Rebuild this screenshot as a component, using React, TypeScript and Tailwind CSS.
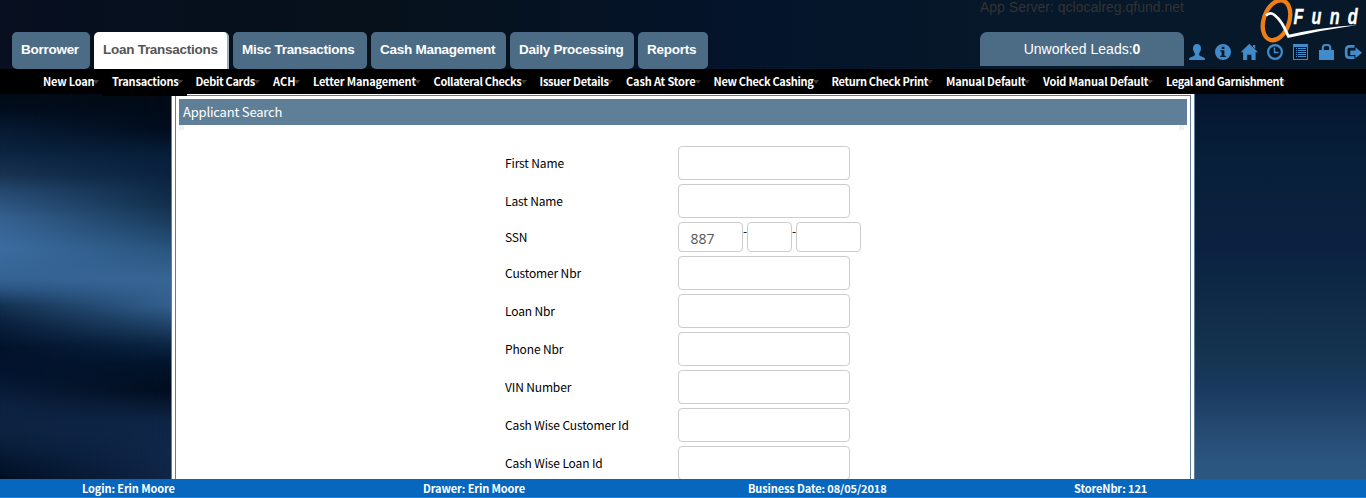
import type { ReactNode } from 'react';

const SANS = "font-['Liberation_Sans',Arial,sans-serif]";
const SOURCE = "font-['Noto_Sans_CJK_SC','Source_Sans_Pro',sans-serif]";

const tabs = [
  { label: 'Borrower', width: 'w-[78px]' },
  { label: 'Loan Transactions', width: 'w-[135px]', active: true },
  { label: 'Misc Transactions', width: 'w-[134px]' },
  { label: 'Cash Management', width: 'w-[135px]' },
  { label: 'Daily Processing', width: 'w-[124px]' },
  { label: 'Reports', width: 'w-[70px]' },
];

const menu = [
  { label: 'New Loan', width: 'w-[69px] tracking-[-0.2px]' },
  { label: 'Transactions', width: 'w-[83.5px] tracking-[-0.23px]' },
  { label: 'Debit Cards', width: 'w-[77.5px] tracking-[-0.3px]' },
  { label: 'ACH', width: 'w-[40px]' },
  { label: 'Letter Management', width: 'w-[120.5px] tracking-[-0.17px]' },
  { label: 'Collateral Checks', width: 'w-[106px] tracking-[-0.34px]' },
  { label: 'Issuer Details', width: 'w-[86.5px] tracking-[-0.23px]' },
  { label: 'Cash At Store', width: 'w-[87.5px] tracking-[-0.16px]' },
  { label: 'New Check Cashing', width: 'w-[118px] tracking-[-0.32px]' },
  { label: 'Return Check Print', width: 'w-[114.5px] tracking-[-0.32px]' },
  { label: 'Manual Default', width: 'w-[97px] tracking-[-0.19px]' },
  { label: 'Void Manual Default', width: 'w-[123px] tracking-[-0.17px]' },
  { label: 'Legal and Garnishment', width: 'w-[133px] tracking-[-0.36px]' },
];

function Icon({ children }: { children: ReactNode }) {
  return (
    <svg viewBox="0 0 16 16" className="size-4 overflow-visible" fill="#428bca">
      {children}
    </svg>
  );
}

function Icons() {
  return (
    <div className="mt-3 ml-[5px] flex gap-[10px]">
      <Icon>
        <path d="M8 0c2.500 0 4 1.700 4 4.200 0 2.300-.8 4-1.800 5v1.600c0 .6.5.9 1 1.100l3.600 1.500c.8.4 1.200 1 1.200 2.600H0c0-1.600.4-2.200 1.200-2.600l3.600-1.500c.5-.2 1-.5 1-1.100V9.200C4.800 8.200 4 6.500 4 4.200 4 1.700 5.500 0 8 0z" />
      </Icon>
      <Icon>
        <path fillRule="evenodd" d="M8 0a8 8 0 1 1 0 16A8 8 0 0 1 8 0zM6.700 2.700v2.300h2.700V2.700zM5.300 6.200v1.300h1.300v4.200H5.300V13h5.400v-1.300H9.400V6.200z" />
      </Icon>
      <Icon>
        <path d="M8.300-.3 17 8.200h-2.400V16h-4.100v-5.200H6.200V16H2.100V8.200H-.3L8.300-.3zM12 .9h2.200v4L12 2.800z" />
      </Icon>
      <Icon>
        <circle cx="8" cy="8" r="6.900" fill="none" stroke="#428bca" strokeWidth="2.200" />
        <path d="M7.500 3.500v5h4" fill="none" stroke="#428bca" strokeWidth="1.400" />
      </Icon>
      <Icon>
        <path fillRule="evenodd" d="M0 0h15v16H0zM1 3v12h13V3z" />
        <path d="M3 4h1v1H3zM5 4h8v1H5zM3 6h1v1H3zM5 6h8v1H5zM3 8h1v1H3zM5 8h8v1H5zM3 10h1v1H3zM5 10h8v1H5zM3 12h1v1H3zM5 12h8v1H5z" />
      </Icon>
      <Icon>
        <path fillRule="evenodd" d="M0 6h2.700V4c0-2.500 1.500-4 3.500-4h2.600c2 0 3.500 1.500 3.500 4v2H15v10H0zM4.900 6h5.200V4c0-1.300-.6-2-1.600-2h-2c-1 0-1.600.7-1.600 2z" />
      </Icon>
      <Icon>
        <path d="M9.500 2.300H4.500Q1.200 2.300 1.200 5.500v5Q1.200 13.700 4.500 13.700h5" fill="none" stroke="#428bca" strokeWidth="2.700" />
        <path d="M5.300 6.500h5.200V3.200L17 8.800l-6.500 5.400V11H5.300z" />
      </Icon>
    </div>
  );
}

function Logo() {
  return (
    <svg viewBox="0 0 106 44" className="absolute top-0 left-[1260px] h-[44px] w-[106px]">
      <ellipse cx="16.500" cy="20.300" rx="12.700" ry="20.600" transform="rotate(19 16.500 20.300)" fill="none" stroke="#ee7d16" strokeWidth="4.300" />
      <path d="M6 15.500Q10 11.500 14.500 15C21 20 24 27 28.500 36.500" fill="none" stroke="#fff" strokeWidth="2.800" />
      <path d="M27.500 35 Q60 27.500 97 25 Q62 30 27.500 38z" fill="#fff" />
      <text
        transform="translate(0 24) scale(.72 1)"
        x="46.500 71.500 97 122"
        y="0"
        fill="#fff"
        stroke="#fff"
        strokeWidth=".4"
        className="font-['Liberation_Sans',Arial,sans-serif] text-[22.5px] font-bold italic"
      >
        Fund
      </text>
    </svg>
  );
}

function Header() {
  return (
    <header className={`relative flex h-[69px] shrink-0 items-start bg-[linear-gradient(to_right,#070f20,#06111b_28%,#04142b_55%,#061829_75%,#071829)] pl-3 ${SANS}`}>
      <nav className="mt-8 flex h-[37px] gap-1">
        {tabs.map((t) => (
          <a
            key={t.label}
            className={`flex items-center rounded-[5px] pl-[9px] text-[13.5px] font-bold tracking-[-0.27px] whitespace-nowrap ${t.width} ${
              t.active
                ? 'rounded-b-none border-r-2 border-[#9db0bf] bg-white text-[#555]'
                : 'bg-[#4c6b85] text-white'
            }`}
          >
            {t.label}
          </a>
        ))}
      </nav>
      <div className="ml-[272px] w-[204px]">
        <p className="h-8 text-[14px] leading-[15px] whitespace-nowrap text-[#333]">App Server: qclocalreg.qfund.net</p>
        <div className="flex h-[34px] items-center justify-center rounded-t-[7px] bg-[#4c6b85] text-[14px] text-white">
          Unworked Leads:<b>0</b>
        </div>
      </div>
      <div className="mt-8">
        <Icons />
      </div>
      <Logo />
    </header>
  );
}

function Menu() {
  return (
    <nav className={`relative z-10 flex h-[25px] shrink-0 bg-black pl-[43px] text-[11px] leading-[25px] font-bold text-white ${SOURCE}`}>
      {menu.map((m) => (
        <a key={m.label} className={`relative block shrink-0 whitespace-nowrap ${m.width}`}>
          {m.label === 'Transactions' && <span className="absolute top-[25px] -left-[9px] h-[2px] w-[84px] bg-black" />}
          <span className="absolute top-[11px] right-[13px] border-x-[3.5px] border-t-4 border-x-transparent border-t-[#3c3c3c]" />
          <span className="relative">{m.label}</span>
        </a>
      ))}
    </nav>
  );
}

function Box({ size, children }: { size: string; children?: ReactNode }) {
  return (
    <span className={`block shrink-0 rounded-[4px] border border-[#ccc] bg-white ${size}`}>{children}</span>
  );
}

function Row({ label, children }: { label: string; children?: ReactNode }) {
  return (
    <div className="flex shrink-0 items-center">
      <label className="w-[173px] pb-px tracking-[-0.14px]">{label}</label>
      {children ?? <Box size="h-[34px] w-[172px]" />}
    </div>
  );
}

function SearchPanel() {
  return (
    <main className="h-full w-[1024px] shrink-0 overflow-hidden border-x border-[#5f7f98] bg-white px-[3px] pt-px">
      <div className="h-[500px] border border-[#5f7f98] px-[3px] pt-[3px]">
        <h1 className={`h-[26px] bg-[#5f7f98] pl-1 text-[13px] leading-[26px] tracking-[-0.2px] text-white ${SOURCE}`}>Applicant Search</h1>
        <div className="flex justify-between pr-[3px]">
          <i className="size-[5px] bg-[#f0f2e4]" />
          <i className="size-[5px] bg-[#f0f2e4]" />
        </div>
        <form className={`mt-4 ml-[326px] flex flex-col gap-1 text-[12px] leading-[18px] text-black ${SOURCE}`}>
          <Row label="First Name" />
          <Row label="Last Name" />
          <Row label="SSN">
            <div className="flex text-[12px] leading-[18px]">
              <Box size="h-[30px] w-[65px]">
                <span className="block pt-[6px] pl-[11.5px] font-['Open_Sans','Noto_Sans',sans-serif] text-[14px] leading-[20px] text-[#555]">887</span>
              </Box>
              <span className="w-1">-</span>
              <Box size="h-[30px] w-[45px]" />
              <span className="w-1">-</span>
              <Box size="h-[30px] w-[65px]" />
            </div>
          </Row>
          <Row label="Customer Nbr" />
          <Row label="Loan Nbr" />
          <Row label="Phone Nbr" />
          <Row label="VIN Number" />
          <Row label="Cash Wise Customer Id" />
          <Row label="Cash Wise Loan Id" />
        </form>
      </div>
    </main>
  );
}

export default function App() {
  return (
    <div className="flex h-[498px] w-[1366px] flex-col overflow-hidden bg-black">
      <Header />
      <Menu />
      <div className="flex h-[385px] shrink-0">
        <div className="w-[171px] shrink-0 bg-[linear-gradient(180deg,#020b18_0%,#020d1d_4%,#06182f_8%,#0c2440_15%,#183350_21%,#25486f_25%,#35608f_32%,#3c6da1_40%,#356393_48%,#29527f_51%,#143150_55%,#0a1f3c_60%,#02122a_66%,#03152f_73%,#0d2240_81%,#0c2340_88%,#061a34_94%,#010e22_100%)]">
          <div className="h-full bg-[linear-gradient(180deg,#020a15_0%,#010c1d_9%,#071f3a_16%,#0a2240_21%,#12304c_29%,#1b3f62_34%,#2a5680_41%,#376594_48%,#33608f_55%,#204468_60%,#0c2645_65%,#02142b_70%,#010d1f_77%,#0e2546_85%,#10274a_93%,#0f2648_100%)] [mask-image:linear-gradient(to_right,transparent,black)]" />
        </div>
        <SearchPanel />
        <div className="flex-1 bg-[linear-gradient(180deg,#04162e_0%,#071f3a_17%,#0b213d_33%,#0c2142_40%,#0b2744_47%,#122e4a_60%,#14344f_68%,#1a3a61_77%,#24486f_86%,#2a557f_95%,#2b5780_100%)]" />
      </div>
      <footer className={`relative flex h-[19px] shrink-0 border-b border-[#1a86ea] bg-[#0767bf] pl-[82px] text-[11px] leading-[19px] font-bold tracking-[-0.12px] text-white ${SOURCE}`}>
        <span className="w-[341px]">Login: Erin Moore</span>
        <span className="w-[325px]">Drawer: Erin Moore</span>
        <span className="w-[326px]">Business Date: 08/05/2018</span>
        <span>StoreNbr: 121</span>
      </footer>
    </div>
  );
}
